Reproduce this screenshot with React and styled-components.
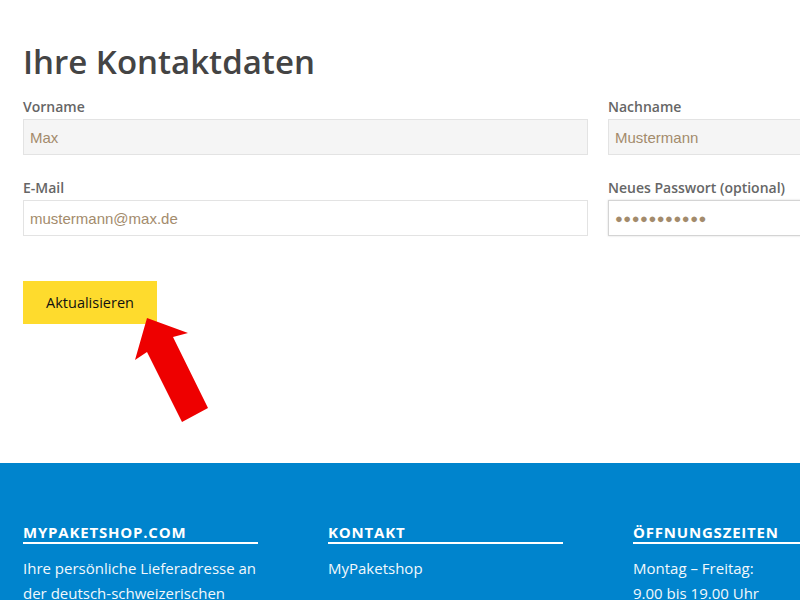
import styled, { createGlobalStyle } from "styled-components";

const GlobalStyle = createGlobalStyle`
  html, body {
    margin: 0;
    padding: 0;
    background: #ffffff;
    overflow: hidden;
  }
  body {
    font-family: "Open Sans", "Noto Sans", sans-serif;
  }
`;

const Page = styled.div`
  position: relative;
  width: 800px;
  height: 600px;
  overflow: hidden;
`;

const Main = styled.main`
  height: 463px;
  padding: 42px 0 0 23px;
  box-sizing: border-box;
`;

const Title = styled.h1`
  margin: 0 0 15px;
  font-size: 33px;
  font-weight: 600;
  line-height: 40px;
  color: #444444;
  letter-spacing: 0;
`;

const FieldGrid = styled.div`
  display: grid;
  grid-template-columns: 565px 565px;
  column-gap: 20px;
  row-gap: 23px;
`;

const Field = styled.div`
  display: flex;
  flex-direction: column;
`;

const Label = styled.label`
  font-size: 14px;
  font-weight: 600;
  color: #666666;
  line-height: 19px;
  margin-bottom: 3px;
`;

const Input = styled.div`
  height: 36px;
  box-sizing: border-box;
  padding: 0 6px;
  display: flex;
  align-items: center;
  font-family: "Liberation Sans", Arial, sans-serif;
  font-size: 15px;
  color: #a38b6c;
  background: ${(p) => (p.$filled ? "#f5f5f5" : "#ffffff")};
  border: 1px solid ${(p) => (p.$focus ? "#d4d4d4" : "#e3e3e3")};
  box-shadow: ${(p) => (p.$focus ? "0 0 2px rgba(0,0,0,0.15)" : "none")};
`;

const Dots = styled.span`
  font-size: 13px;
  letter-spacing: 0.5px;
  color: #a38b6c;
`;

const Button = styled.button`
  margin-top: 45px;
  width: 134px;
  height: 43px;
  border: none;
  background: #fedb2d;
  color: #111111;
  font-family: "Open Sans", "Noto Sans", sans-serif;
  font-size: 14.5px;
  padding: 0;
`;

const Arrow = styled.svg`
  position: absolute;
  left: 120px;
  top: 305px;
  filter: blur(0.6px);
`;

const Footer = styled.footer`
  height: 137px;
  background: #0084cd;
  padding: 60px 0 0 23px;
  box-sizing: border-box;
  display: grid;
  grid-template-columns: 235px 235px 235px;
  column-gap: 70px;
`;

const FooterCol = styled.div`
  color: #ffffff;
`;

const FooterHead = styled.h3`
  margin: 0;
  font-size: 15px;
  font-weight: 700;
  letter-spacing: 0.8px;
  line-height: 19px;
  padding-bottom: 0;
  border-bottom: 2px solid #ffffff;
`;

const FooterText = styled.p`
  margin: 12px 0 0;
  font-size: 15px;
  line-height: 25px;
  color: #f2f8fc;
`;

export default function App() {
  return (
    <Page>
      <GlobalStyle />
      <Main>
        <Title>Ihre Kontaktdaten</Title>
        <FieldGrid>
          <Field>
            <Label>Vorname</Label>
            <Input $filled>Max</Input>
          </Field>
          <Field>
            <Label>Nachname</Label>
            <Input $filled>Mustermann</Input>
          </Field>
          <Field>
            <Label>E-Mail</Label>
            <Input>mustermann@max.de</Input>
          </Field>
          <Field>
            <Label>Neues Passwort (optional)</Label>
            <Input $focus>
              <Dots>●●●●●●●●●●●</Dots>
            </Input>
          </Field>
        </FieldGrid>
        <Button>Aktualisieren</Button>
      </Main>
      <Arrow width="100" height="125" viewBox="0 0 100 125">
        <polygon
          points="27,13 68,28 53,32 88,103 62,117 27,47 15,55"
          fill="#ee0000"
        />
      </Arrow>
      <Footer>
        <FooterCol>
          <FooterHead>MYPAKETSHOP.COM</FooterHead>
          <FooterText>
            Ihre persönliche Lieferadresse an der deutsch-schweizerischen
          </FooterText>
        </FooterCol>
        <FooterCol>
          <FooterHead>KONTAKT</FooterHead>
          <FooterText>MyPaketshop</FooterText>
        </FooterCol>
        <FooterCol>
          <FooterHead>ÖFFNUNGSZEITEN</FooterHead>
          <FooterText>
            Montag – Freitag:
            <br />
            9.00 bis 19.00 Uhr
          </FooterText>
        </FooterCol>
      </Footer>
    </Page>
  );
}
